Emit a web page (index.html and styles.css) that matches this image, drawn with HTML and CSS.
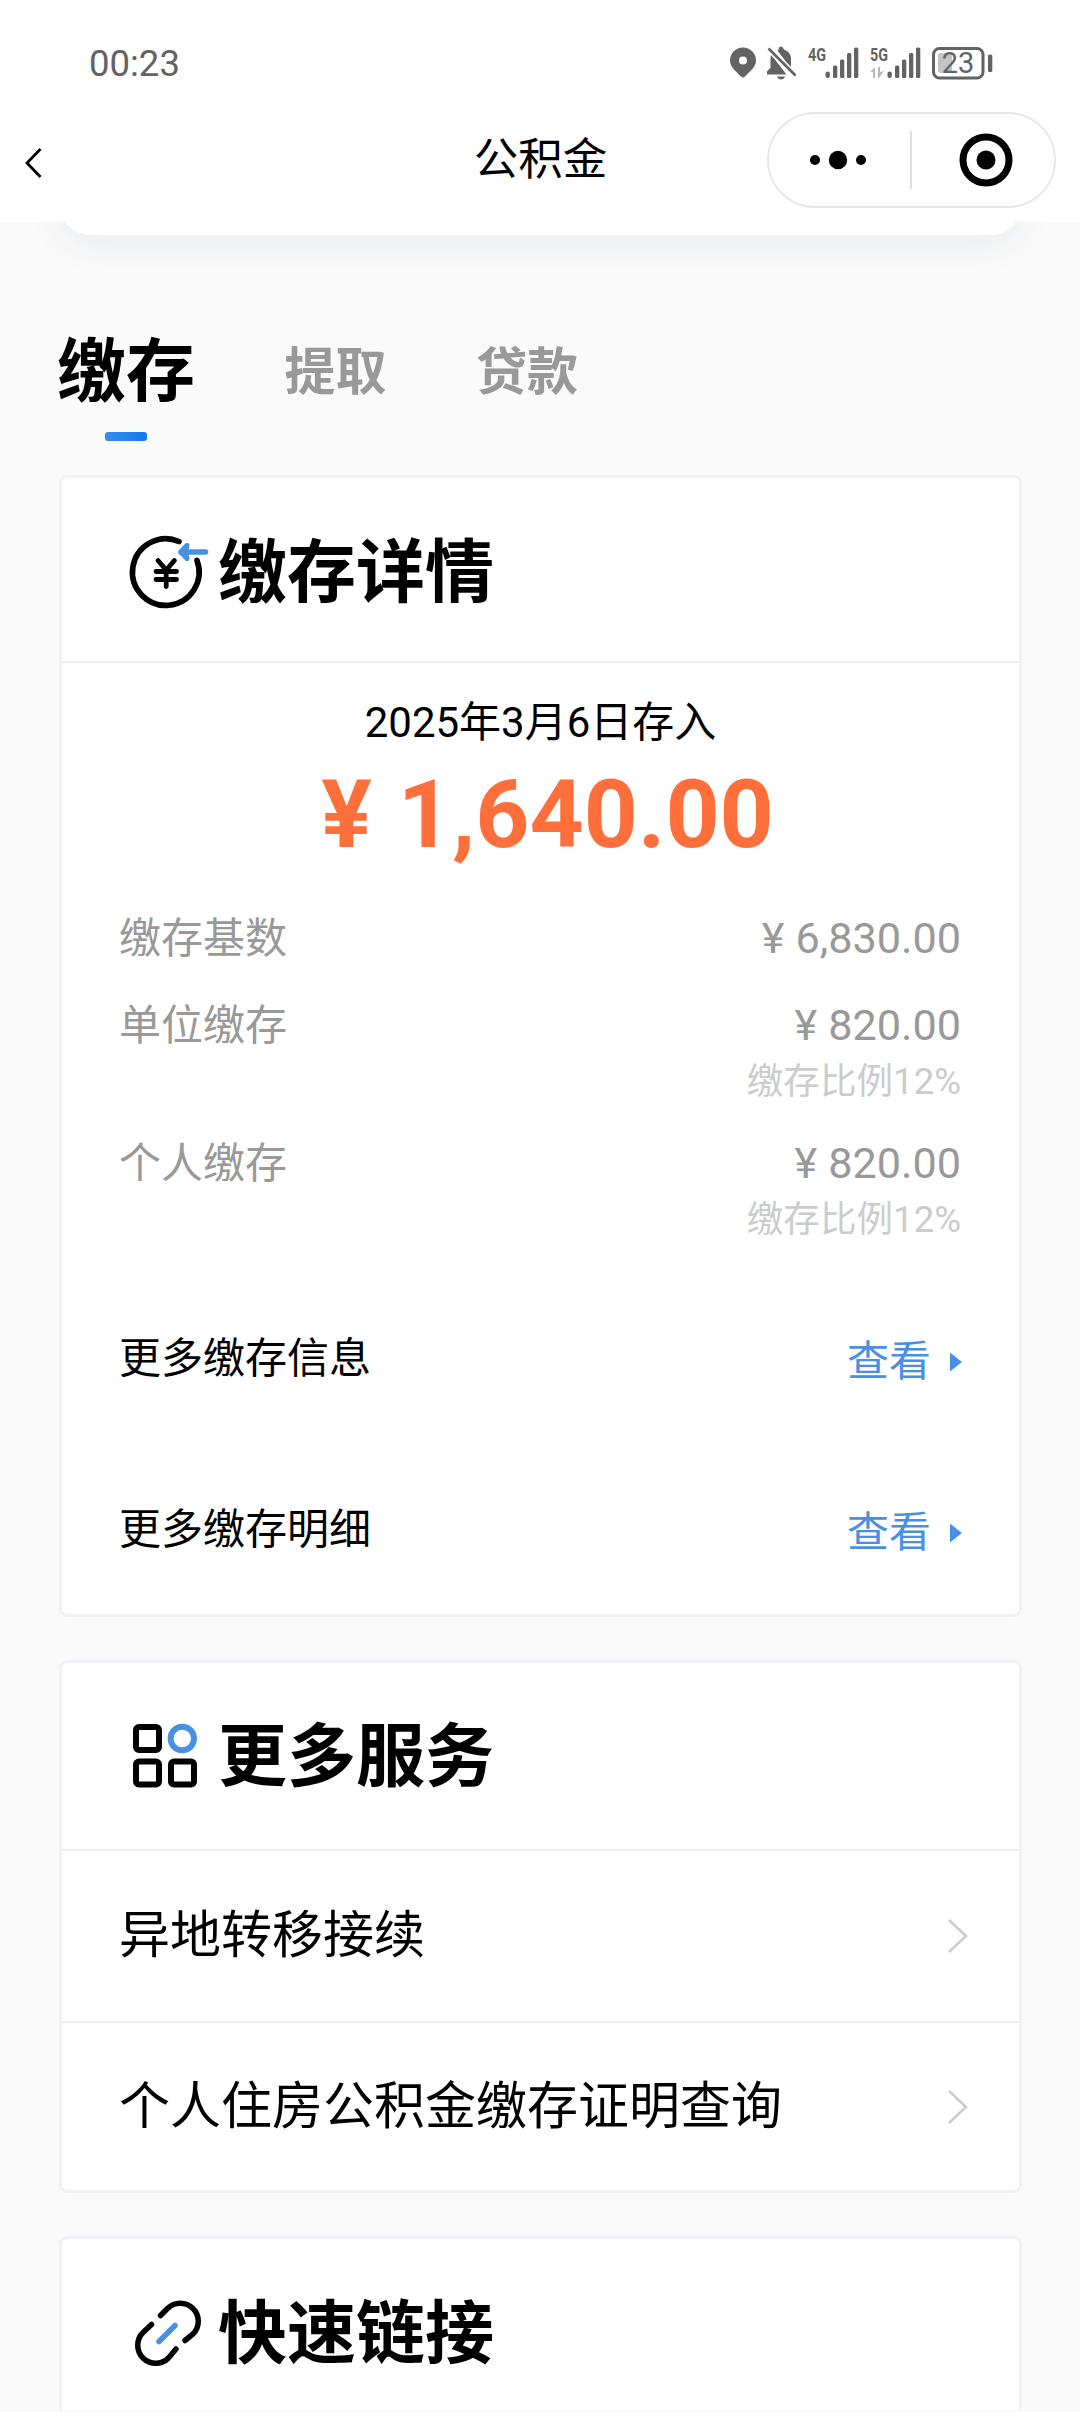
FILE: index.html
```html
<!DOCTYPE html>
<html lang="zh-CN">
<head>
<meta charset="utf-8">
<title>公积金</title>
<link rel="stylesheet" href="styles.css">
</head>
<body>
<header class="header">
  <div class="status">
    <span class="clock">00:23</span>
    <div class="status-icons">
      <svg width="26" height="32" viewBox="0 0 26 32"><path fill="#636363" fill-rule="evenodd" d="M13 1.500a13 13 0 0 1 13 13c0 6-4.500 9.500-11 16q-2 1.800-4 0C4.500 24 0 20.500 0 14.500a13 13 0 0 1 13-13Zm0 9a4 4 0 1 0 0 8 4 4 0 0 0 0-8Z"/></svg>
      <svg width="30" height="34" viewBox="0 0 30 34"><path fill="#636363" d="M10.500 4.500 24 22.500V13c0-5-3-8-7-9.500Q16 .5 14 .5T11.500 3.500ZM4 8.500 19.500 28.500H0v-3l3.500-4V12ZM10 30.500h8q-1 3-4 3t-4-3Z"/><path d="M1.500 2.500 28.500 29.500" stroke="#fff" stroke-width="6"/><path d="M1.500 2.500 28.500 29.500" stroke="#636363" stroke-width="2.600"/></svg>
      <svg width="51" height="34" viewBox="0 0 51 34" fill="#636363"><text class="net" x="0" y="15" textLength="18" lengthAdjust="spacingAndGlyphs">4G</text><rect x="17.500" y="25.500" width="4.300" height="6.500" rx="2"/><rect x="25" y="19.500" width="4.300" height="12.500" rx="1.500"/><rect x="32" y="13.500" width="4.300" height="18.500" rx="1.500"/><rect x="39" y="7" width="4.300" height="25" rx="1.500"/><rect x="46" y="1.500" width="4.300" height="30.500" rx="1.500"/></svg>
      <svg width="51" height="34" viewBox="0 0 51 34" fill="#636363"><text class="net" x="0" y="15" textLength="18" lengthAdjust="spacingAndGlyphs">5G</text><path fill="#b9b9b9" d="M5 21v11H3v-6H0Zm3 0h2v5l4-1-5 7H8Z"/><rect x="17.500" y="25.500" width="4.300" height="6.500" rx="2"/><rect x="25" y="19.500" width="4.300" height="12.500" rx="1.500"/><rect x="32" y="13.500" width="4.300" height="18.500" rx="1.500"/><rect x="39" y="7" width="4.300" height="25" rx="1.500"/><rect x="46" y="1.500" width="4.300" height="30.500" rx="1.500"/></svg>
      <svg width="61" height="34" viewBox="0 0 61 34"><rect x="6" y="7" width="14" height="20" rx="3" fill="#c4c4c4"/><rect x="1.500" y="2.500" width="49.500" height="29.500" rx="6" fill="none" stroke="#636363" stroke-width="3"/><rect x="56" y="8.500" width="4.300" height="17.500" rx="1.500" fill="#636363"/><text class="level" x="26" y="27" text-anchor="middle">23</text></svg>
    </div>
  </div>
  <nav class="nav">
    <svg class="back" width="18" height="32" viewBox="0 0 18 32"><path d="M15.500 2 2 16 15.500 30" fill="none" stroke="#000" stroke-width="2.800"/></svg>
    <h1 class="nav-title">公积金</h1>
    <div class="capsule">
      <svg width="58" height="20" viewBox="0 0 58 20"><circle cx="6" cy="10" r="5"/><circle cx="29" cy="10" r="9.200"/><circle cx="52" cy="10" r="5"/></svg>
      <span class="capsule-line"></span>
      <svg width="54" height="54" viewBox="0 0 54 54"><circle cx="27" cy="27" r="23" fill="none" stroke="#000" stroke-width="7"/><circle cx="27" cy="27" r="9.500"/></svg>
    </div>
  </nav>
</header>
<main class="content">
  <div class="summary"></div>
  <div class="tabs">
    <span class="tab active">缴存</span>
    <span class="tab">提取</span>
    <span class="tab">贷款</span>
  </div>
  <section class="card detail">
    <h2 class="card-head">
      <svg width="84" height="80" viewBox="126 533 84 80" fill="none" stroke="#000" stroke-width="5.600" stroke-linecap="round"><path d="M179 542.500A33.300 33.300 0 1 0 197 561.500"/><path d="m158 561.500 8.200 9.500 8.200-9.500M156 572.500h20.500M156 580.500h20.500M166.200 571v16.500" stroke-width="4.800"/><path stroke="#4a90e2" d="M205.500 553H182"/><path fill="#4a90e2" stroke="#4a90e2" stroke-width="5" stroke-linejoin="round" d="m187 546.500-6.500 6.500 6.500 6.500-1.500-6.500Z"/></svg>
      <span>缴存详情</span>
    </h2>
    <div class="deposit">
      <p class="date">2025年3月6日存入</p>
      <p class="amount"><span class="yen">¥</span>1,640.00</p>
    </div>
    <dl class="figures">
      <div class="figure"><dt>缴存基数</dt><dd><span class="yen">¥</span>6,830.00</dd></div>
      <div class="figure with-rate"><dt>单位缴存</dt><dd><span class="yen">¥</span>820.00<small>缴存比例12%</small></dd></div>
      <div class="figure with-rate"><dt>个人缴存</dt><dd><span class="yen">¥</span>820.00<small>缴存比例12%</small></dd></div>
    </dl>
    <div class="more"><span>更多缴存信息</span><a class="view">查看<svg width="12" height="20" viewBox="0 0 12 20"><path fill="#4a90e2" d="M0 .5 12 10 0 19.500Z"/></svg></a></div>
    <div class="more"><span>更多缴存明细</span><a class="view">查看<svg width="12" height="20" viewBox="0 0 12 20"><path fill="#4a90e2" d="M0 .5 12 10 0 19.500Z"/></svg></a></div>
  </section>
  <section class="card services">
    <h2 class="card-head">
      <svg width="84" height="80" viewBox="126 1717 84 80" fill="none" stroke="#000" stroke-width="6"><rect x="136" y="1728" width="23" height="23" rx="3"/><rect x="136" y="1762.500" width="23" height="23" rx="3"/><rect x="171" y="1762.500" width="23" height="23" rx="3"/><circle cx="182.300" cy="1739.500" r="11.700" stroke="#4a90e2"/></svg>
      <span>更多服务</span>
    </h2>
    <div class="service"><span>异地转移接续</span><svg width="22" height="36" viewBox="0 0 22 36"><path d="m2 2 17 16L2 34" fill="none" stroke="#ccc" stroke-width="2.500"/></svg></div>
    <div class="service"><span>个人住房公积金缴存证明查询</span><svg width="22" height="36" viewBox="0 0 22 36"><path d="m2 2 17 16L2 34" fill="none" stroke="#ccc" stroke-width="2.500"/></svg></div>
  </section>
  <section class="card links">
    <h2 class="card-head">
      <svg width="84" height="80" viewBox="126 2294 84 80" fill="none" stroke="#000" stroke-width="5.500" stroke-linecap="round"><path d="M160.500 2316.500 167.500 2309.500A18 18 0 0 1 193 2335L185 2341.500M151.500 2325.500 143 2333.500A18 18 0 0 0 168.500 2359L176 2350"/><path stroke="#4a90e2" d="m159 2342.500 16-16"/></svg>
      <span>快速链接</span>
    </h2>
  </section>
</main>
</body>
</html>
```
FILE: styles.css
```css
* { box-sizing: border-box; margin: 0; padding: 0; }
svg { display: block; flex: none; overflow: visible; }

body {
  width: 1080px;
  height: 2412px;
  overflow: hidden;
  background: #fafafa;
  color: #000;
  font-family: Roboto, "Noto Sans CJK SC", sans-serif;
}

.header {
  position: relative;
  z-index: 1;
  height: 222px;
  background: #fff;
}

.status {
  display: flex;
  justify-content: space-between;
  height: 112px;
  padding: 46px 87px 0 89px;
}
.clock { font-size: 36.500px; line-height: 36px; color: #636363; }
.status-icons { display: flex; gap: 11px; }
.net { font-size: 19px; font-weight: 700; }
.level { font-size: 29px; fill: #636363; }

.nav {
  display: grid;
  grid-template-columns: 1fr auto 1fr;
  align-items: center;
  height: 96px;
  padding: 0 24px 0 25px;
}
.back { margin-top: 6px; }
.nav-title { font-size: 44.500px; font-weight: 400; line-height: 60px; }
.capsule {
  display: flex;
  align-items: center;
  justify-self: end;
  width: 289px;
  height: 96px;
  padding-left: 40px;
  border: 2px solid #e8e8e8;
  border-radius: 48px;
}
.capsule-line { width: 2px; height: 58px; margin: 0 47px 0 43px; background: #dedede; }

.content { padding: 0 58px 0 59px; }
.summary {
  height: 100px;
  margin: -87px 1px 0 1px;
  border-radius: 30px;
  background: #fff;
  box-shadow: 0 10px 36px rgba(20, 50, 80, .07);
}

.tabs {
  display: flex;
  gap: 89.500px;
  height: 240px;
  padding-top: 86px;
  margin-left: -2px;
}
.tab { height: 104px; color: #999; font-size: 51px; font-weight: 700; line-height: 104px; }
.tab.active {
  display: flex;
  flex-direction: column;
  align-items: center;
  color: #000;
  font-size: 69px;
}
.tab.active::after {
  content: "";
  flex: none;
  width: 42px;
  height: 9px;
  margin-top: 7px;
  border-radius: 3px;
  background: linear-gradient(100deg, #3d8df0, #0f78ea);
}

.card {
  margin-bottom: 43px;
  border: 3px solid #f0f0f6;
  border-radius: 8px;
  background: #fff;
}
.card-head {
  display: flex;
  align-items: center;
  gap: 8px;
  height: 185px;
  padding-left: 64px;
  border-bottom: 2px solid #efeff3;
  font-size: 69px;
  font-weight: 700;
  line-height: 100px;
}
.card-head span { margin-top: 4px; }
.detail { height: 1142px; }
.detail .card-head { padding-top: 5px; }

.deposit { padding-top: 32px; text-align: center; }
.date { font-size: 42px; line-height: 56px; }
.amount {
  margin-top: 9px;
  padding-left: 14px;
  color: #ff6f3c;
  font-size: 94.500px;
  font-weight: 700;
  line-height: 110px;
}
.amount .yen { margin-right: 26px; }

.figures { padding: 41px 58px 0 57px; color: #999; }
.figure { display: flex; justify-content: space-between; height: 87px; font-size: 42px; line-height: 56px; }
.figure.with-rate { height: 138px; }
.figure dd { font-size: 43.200px; text-align: right; }
.figure .yen { margin-right: 11px; }
.figure small { display: block; color: #ccc; font-size: 36.600px; line-height: 55px; }

.more {
  display: flex;
  justify-content: space-between;
  height: 171px;
  padding: 57px 57px 0 57px;
  font-size: 42px;
  line-height: 56px;
}
.view { display: flex; align-items: center; gap: 19px; height: 62px; color: #4a90e2; }

.services .card-head { height: 188px; }
.services { height: 533px; }
.service {
  display: flex;
  align-items: center;
  justify-content: space-between;
  height: 170px;
  padding: 0 50px 0 57px;
  font-size: 51px;
  line-height: 72px;
}
.service + .service { border-top: 2px solid #efeff3; }
.links {
  height: 174px;
  margin-bottom: 0;
  border-bottom: 0;
  border-radius: 8px 8px 0 0;
}
.links .card-head { height: 171px; padding-top: 16px; border-bottom: 0; }
```
